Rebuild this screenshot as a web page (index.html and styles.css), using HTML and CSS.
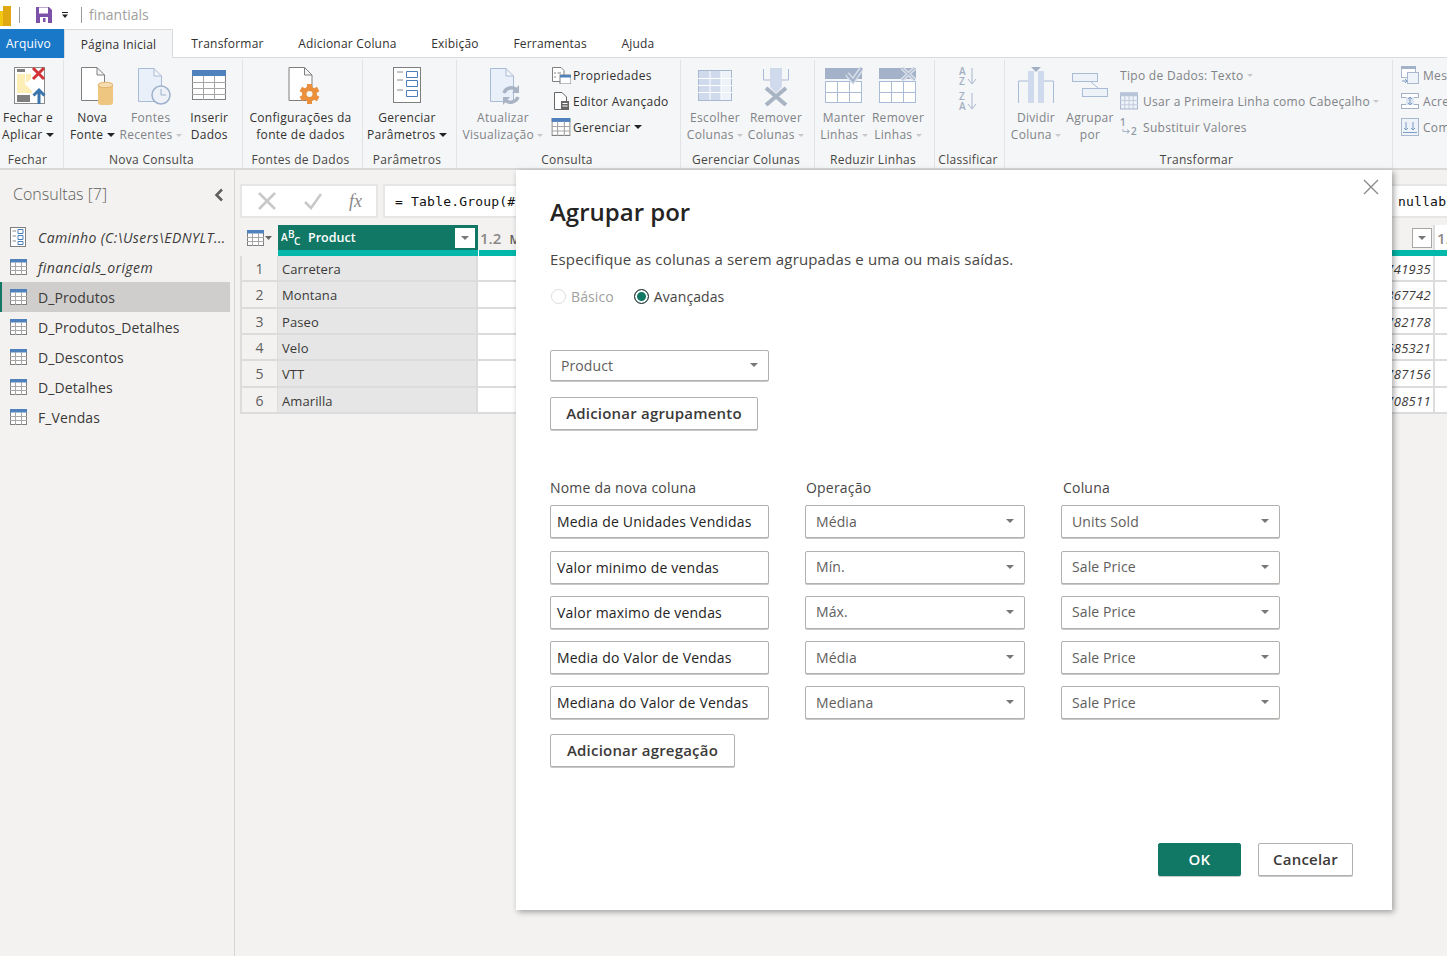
FILE: index.html
```html
<!DOCTYPE html>
<html lang="en">
<head>
	<meta charset="UTF-8">
	<meta name="viewport" content="width=device-width, initial-scale=1.0">
	<title>financials - Power Query</title>
	<link rel="stylesheet" href="styles.css">
</head>
<body>
	<svg class="defs" width="0" height="0">
		<symbol id="tbl" viewBox="0 0 17 16">
			<rect x="0.5" y="0.5" width="16" height="15" fill="#fff" stroke="#7f7f7f"/>
			<rect x="0" y="0" width="17" height="3.5" fill="#4f81bd"/>
			<path d="M0 7.5H17M0 11.5H17M5.5 3V16M11.5 3V16" stroke="#a6a6a6" fill="none"/>
		</symbol>
	</svg>

	<!-- Title bar -->
	<div class="title-bar">
		<svg class="logo" width="11" height="20" viewBox="0 0 11 20"><rect x="0" y="5" width="3" height="15" fill="#f2c811"/><rect x="3" y="0" width="8" height="20" fill="#e0a912"/></svg>
		<span class="title-sep"></span>
		<svg width="20" height="20" viewBox="0 0 20 20"><path d="M2 2H15L18 5V18H2Z" fill="#7b52a8"/><rect x="5" y="2.5" width="9" height="6" fill="#fff"/><rect x="6" y="12" width="8" height="6" fill="#fff"/><rect x="9" y="13" width="2.5" height="4" fill="#7b52a8"/></svg>
		<svg class="qat-arrow" width="8" height="8" viewBox="0 0 8 8"><rect x="1" y="1" width="6" height="1" fill="#222"/><path d="M1 3.5H7L4 7Z" fill="#222"/></svg>
		<span class="title-sep second"></span>
		<span class="title-name">finantials</span>
	</div>

	<!-- Tabs -->
	<div class="tabs">
		<div class="tab-file">Arquivo</div>
		<div class="tab tab-active">Página Inicial</div>
		<div class="tab">Transformar</div>
		<div class="tab">Adicionar Coluna</div>
		<div class="tab">Exibição</div>
		<div class="tab">Ferramentas</div>
		<div class="tab">Ajuda</div>
	</div>

	<!-- Ribbon -->
	<div class="ribbon">
		<div class="group g-fechar">
			<div class="group-body">
				<div class="rbtn w-fechar">
					<svg width="36" height="40" viewBox="0 0 36 40">
						<rect x="4.5" y="1.5" width="30" height="36" fill="#fff" stroke="#8a8a8a"/>
						<rect x="7" y="3" width="8" height="3" fill="#7f7f7f"/>
						<path d="M7 8H15V18L22 25V27H7Z" fill="#fdeeb5"/>
						<path d="M16 8H21V13L16 17Z" fill="#fdeeb5"/>
						<rect x="7" y="29" width="13" height="7" fill="#7f7f7f"/>
						<path d="M23 2L34 13M34 2L23 13" stroke="#d13438" stroke-width="3" fill="none"/>
						<path d="M29 38V24M23.500 29.500L29 24L34.500 29.500" stroke="#3a75ad" stroke-width="3" fill="none"/>
					</svg>
					<span>Fechar e</span>
					<span>Aplicar <i class="caret"></i></span>
				</div>
			</div>
			<div class="group-label">Fechar</div>
		</div>

		<div class="group g-nova">
			<div class="group-body">
				<div class="rbtn w-58">
					<svg width="42" height="40" viewBox="0 0 42 40">
						<path d="M10.500 1.500H26L33.500 9V34.500H10.500Z M26 1.500V9H33.500" fill="#fff" stroke="#7f7f7f"/>
						<rect x="27" y="18" width="15" height="21" rx="3" fill="#efc67f"/>
						<ellipse cx="34.500" cy="19" rx="7.500" ry="2.700" fill="#f6dcae" stroke="#e0b269"/>
					</svg>
					<span>Nova</span>
					<span>Fonte <i class="caret"></i></span>
				</div>
				<div class="rbtn w-58 off">
					<svg width="42" height="40" viewBox="0 0 42 40">
						<path d="M8.500 2.500H24L31.500 10V35.500H8.500Z M24 2.500V10H31.500" fill="#e9f0fa" stroke="#a9bbd6"/>
						<circle cx="31" cy="29" r="9" fill="#eef2f8" stroke="#9eb1cd" stroke-width="1.500"/>
						<path d="M31 23V29H36" stroke="#9eb1cd" fill="none"/>
					</svg>
					<span>Fontes</span>
					<span>Recentes <i class="caret"></i></span>
				</div>
				<div class="rbtn w-58">
					<svg width="36" height="40" viewBox="0 0 36 40">
						<rect x="1.500" y="4.500" width="33" height="29" fill="#fff" stroke="#808080"/>
						<rect x="1" y="4" width="34" height="6" fill="#4f81bd"/>
						<path d="M1 16.500H35M1 22.500H35M1 28.500H35M12.500 10V34M23.500 10V34" stroke="#a6a6a6" fill="none"/>
					</svg>
					<span>Inserir</span>
					<span>Dados</span>
				</div>
			</div>
			<div class="group-label">Nova Consulta</div>
		</div>

		<div class="group g-fontes">
			<div class="group-body">
				<div class="rbtn w-fill">
					<svg width="38" height="40" viewBox="0 0 38 40">
						<path d="M7 1.500H22.500L30 9V34.500H7Z M22.500 1.500V9H30" fill="#fff" stroke="#7f7f7f"/>
						<g fill="#ea8f3c">
							<rect x="25" y="18" width="5" height="20"/>
							<rect x="25" y="18" width="5" height="20" transform="rotate(60 27.500 28)"/>
							<rect x="25" y="18" width="5" height="20" transform="rotate(120 27.500 28)"/>
							<circle cx="27.500" cy="28" r="7.500"/>
						</g>
						<circle cx="27.500" cy="28" r="3" fill="#f5f6f7"/>
					</svg>
					<span>Configurações da</span>
					<span>fonte de dados</span>
				</div>
			</div>
			<div class="group-label">Fontes de Dados</div>
		</div>

		<div class="group g-param">
			<div class="group-body">
				<div class="rbtn w-fill">
					<svg width="30" height="40" viewBox="0 0 30 40">
						<rect x="1.500" y="1.500" width="27" height="35" fill="#fff" stroke="#7f7f7f"/>
						<path d="M5 6H11M5 14H11M5 24H11" stroke="#8a8a8a" fill="none"/>
						<path d="M14.500 5.500H25.500V11.500H14.500ZM14.500 14.500H25.500V20.500H14.500ZM14.500 24.500H25.500V30.500H14.500Z" fill="#fff" stroke="#4a7ebb"/>
					</svg>
					<span>Gerenciar</span>
					<span>Parâmetros <i class="caret"></i></span>
				</div>
			</div>
			<div class="group-label">Parâmetros</div>
		</div>

		<div class="group g-consulta">
			<div class="group-body">
				<div class="rbtn w-atual off">
					<svg width="34" height="40" viewBox="0 0 34 40">
						<path d="M4.500 2.500H20L27.500 10V35.500H4.500Z M20 2.500V10H27.500" fill="#e9f0fa" stroke="#a9bbd6"/>
						<path d="M18 27A8 8 0 0 1 31 24M32 31A8 8 0 0 1 19 34" stroke="#a8b3c4" stroke-width="3.500" fill="none"/>
						<path d="M33 19V27H26ZM17 39V31H24Z" fill="#a8b3c4"/>
					</svg>
					<span>Atualizar</span>
					<span>Visualização <i class="caret"></i></span>
				</div>
				<div class="small-col">
					<div class="sbtn">
						<svg width="20" height="18" viewBox="0 0 20 18"><path d="M1.500 1.500H10L13 4.500V15.500H1.500Z" fill="#fff" stroke="#808080"/><path d="M3 7H5M6.500 7H10M3 11H5" stroke="#808080"/><rect x="9" y="9" width="11" height="9" fill="#fff" stroke="#7f7f7f"/><rect x="9" y="9" width="11" height="2.500" fill="#4f81bd"/></svg>
						<span>Propriedades</span>
					</div>
					<div class="sbtn">
						<svg width="20" height="18" viewBox="0 0 20 18"><path d="M3.500 0.500H11L15.500 5V17.500H3.500Z" fill="#fff" stroke="#666"/><rect x="10" y="9" width="8" height="9" fill="#666"/><path d="M11.500 11.500H16.500M11.500 14H16.500" stroke="#fff"/></svg>
						<span>Editor Avançado</span>
					</div>
					<div class="sbtn">
						<svg width="20" height="18" viewBox="0 0 17 16"><use href="#tbl"/></svg>
						<span>Gerenciar <i class="caret"></i></span>
					</div>
				</div>
			</div>
			<div class="group-label">Consulta</div>
		</div>

		<div class="group g-colunas">
			<div class="group-body off">
				<div class="rbtn w-escolher">
					<svg width="36" height="40" viewBox="0 0 36 40">
						<rect x="1.500" y="4.500" width="33" height="30" fill="#eef2f9" stroke="#a9b7cf"/>
						<rect x="2" y="5" width="22" height="29" fill="#cfdbec"/>
						<path d="M1 12.500H35M1 19.500H35M1 26.500H35M13 5V34M24 5V34" stroke="#fff" fill="none"/>
					</svg>
					<span>Escolher</span>
					<span>Colunas <i class="caret"></i></span>
				</div>
				<div class="rbtn w-remover">
					<svg width="30" height="40" viewBox="0 0 30 40">
						<path d="M2.500 3V14H9M27.500 3V14H21" stroke="#a9bbd6" fill="none"/>
						<path d="M9 2H21V21L15 27L9 21Z" fill="#cfdbec"/>
						<path d="M5 22L25 39M25 22L5 39" stroke="#a8b3c4" stroke-width="4" fill="none"/>
					</svg>
					<span>Remover</span>
					<span>Colunas <i class="caret"></i></span>
				</div>
			</div>
			<div class="group-label">Gerenciar Colunas</div>
		</div>

		<div class="group g-linhas">
			<div class="group-body off">
				<div class="rbtn w-manter">
					<svg width="38" height="40" viewBox="0 0 38 40">
						<rect x="0" y="2" width="37" height="11" fill="#a3b2c9"/>
						<rect x="0.500" y="15.500" width="36" height="21" fill="#fff" stroke="#a9bbd6"/>
						<path d="M0 26.500H37M12.500 15V37M24.500 15V37" stroke="#a9bbd6" fill="none"/>
						<path d="M22 8L28 15L37 2" stroke="#d6dde8" stroke-width="5" fill="none"/>
						<path d="M22 8L28 15L37 2" stroke="#a3b2c9" stroke-width="2" fill="none"/>
					</svg>
					<span>Manter</span>
					<span>Linhas <i class="caret"></i></span>
				</div>
				<div class="rbtn w-manter">
					<svg width="38" height="40" viewBox="0 0 38 40">
						<rect x="0" y="2" width="37" height="11" fill="#a3b2c9"/>
						<rect x="0.500" y="15.500" width="36" height="21" fill="#fff" stroke="#a9bbd6"/>
						<path d="M0 26.500H37M12.500 15V37M24.500 15V37" stroke="#a9bbd6" fill="none"/>
						<path d="M23 2L36 14M36 2L23 14" stroke="#d6dde8" stroke-width="4" fill="none"/>
						<path d="M23 2L36 14M36 2L23 14" stroke="#a3b2c9" fill="none"/>
					</svg>
					<span>Remover</span>
					<span>Linhas <i class="caret"></i></span>
				</div>
			</div>
			<div class="group-label">Reduzir Linhas</div>
		</div>

		<div class="group g-class">
			<div class="group-body sort-body">
				<svg width="20" height="20" viewBox="0 0 20 20"><text x="1" y="9" class="sort-text">A</text><text x="1" y="19" class="sort-text">Z</text><path d="M14 2V17M10 13L14 18L18 13" stroke="#a9b7cf" fill="none"/></svg>
				<svg width="20" height="20" viewBox="0 0 20 20"><text x="1" y="9" class="sort-text">Z</text><text x="1" y="19" class="sort-text">A</text><path d="M14 2V17M10 13L14 18L18 13" stroke="#a9b7cf" fill="none"/></svg>
			</div>
			<div class="group-label">Classificar</div>
		</div>

		<div class="group g-transf">
			<div class="group-body off">
				<div class="rbtn w-dividir">
					<svg width="38" height="40" viewBox="0 0 38 40">
						<path d="M1.500 37V15H11M36.500 37V15H27" stroke="#a9bbd6" fill="none"/>
						<rect x="11" y="5" width="6" height="32" fill="#cfdbec"/><rect x="21" y="5" width="6" height="32" fill="#cfdbec"/>
						<path d="M14 1H24L19 6Z" fill="#a3afc2"/>
					</svg>
					<span>Dividir</span>
					<span>Coluna <i class="caret"></i></span>
				</div>
				<div class="rbtn w-agrupar">
					<svg width="38" height="40" viewBox="0 0 38 40">
						<rect x="1.500" y="7.500" width="25" height="8" fill="#edf1f8" stroke="#a9bbd6"/>
						<rect x="11.500" y="22.500" width="25" height="8" fill="#edf1f8" stroke="#a9bbd6"/>
						<path d="M20 16L27 22" stroke="#a9bbd6" fill="none"/>
					</svg>
					<span>Agrupar</span>
					<span>por</span>
				</div>
				<div class="small-col">
					<div class="sbtn"><span>Tipo de Dados: Texto <i class="caret"></i></span></div>
					<div class="sbtn">
						<svg width="18" height="18" viewBox="0 0 17 16"><rect x="0.500" y="0.500" width="16" height="15" fill="#eef2f9" stroke="#a9b7cf"/><rect x="0" y="0" width="17" height="3.500" fill="#b7c3d6"/><path d="M0 7.500H17M0 11.500H17M4.500 3V16M8.500 3V16M12.500 3V16" stroke="#c3cddd" fill="none"/></svg>
						<span>Usar a Primeira Linha como Cabeçalho <i class="caret"></i></span>
					</div>
					<div class="sbtn">
						<svg class="swap-icon" width="18" height="18" viewBox="0 0 18 18"><text x="0" y="8" class="swap-text">1</text><text x="11" y="17" class="swap-text">2</text><path d="M3 11V13.500H9M7 11.500L9.500 13.500L7 15.500" stroke="#a3afc2" fill="none"/></svg>
						<span>Substituir Valores</span>
					</div>
				</div>
			</div>
			<div class="group-label">Transformar</div>
		</div>

		<div class="group g-combinar">
			<div class="group-body off">
				<div class="small-col">
					<div class="sbtn">
						<svg width="18" height="18" viewBox="0 0 18 18"><rect x="0.500" y="0.500" width="14" height="11" fill="#fff" stroke="#a9b7cf"/><rect x="0" y="0" width="15" height="3" fill="#a3b2c9"/><rect x="6.500" y="6.500" width="11" height="11" fill="#eef2f9" stroke="#a9b7cf"/><path d="M1 15H6M4 13L6 15L4 17" stroke="#7d9cc4" fill="none"/></svg>
						<span>Mesclar Consultas</span>
					</div>
					<div class="sbtn">
						<svg width="18" height="18" viewBox="0 0 18 18"><rect x="0.500" y="1.500" width="17" height="4" fill="#fff" stroke="#a3afc2"/><rect x="0.500" y="12.500" width="17" height="4" fill="#fff" stroke="#a3afc2"/><rect x="5" y="5" width="8" height="8" fill="#dde5f1"/><path d="M9 5V13M7 7L9 5L11 7M7 11L9 13L11 11" stroke="#7d9cc4" fill="none"/></svg>
						<span>Acrescentar Consultas</span>
					</div>
					<div class="sbtn">
						<svg width="18" height="18" viewBox="0 0 18 18"><rect x="0.500" y="0.500" width="17" height="17" fill="#eef2f9" stroke="#a9b7cf"/><path d="M5 4V12M3 10L5 12L7 10M12 4V12M10 10L12 12L14 10M2 14.500H16" stroke="#7d9cc4" fill="none"/></svg>
						<span>Combinar Arquivos</span>
					</div>
				</div>
			</div>
		</div>
	</div>

	<!-- Queries pane and data grid -->
	<div class="workspace">
		<div class="queries">
			<div class="queries-head">
				<span>Consultas [7]</span>
				<svg width="10" height="14" viewBox="0 0 10 14"><path d="M8 1.500L2.500 7L8 12.500" stroke="#605e5c" stroke-width="2.500" fill="none"/></svg>
			</div>
			<div class="query">
				<svg width="17" height="20" viewBox="0 0 17 20"><rect x="0.500" y="0.500" width="15" height="19" fill="#fff" stroke="#7f7f7f"/><path d="M2.500 4H6M2.500 9H6M2.500 14H6" stroke="#8a8a8a"/><path d="M8 2.500H13V6.500H8ZM8 8.500H13V12.500H8ZM8 14.500H13V17.500H8Z" fill="#fff" stroke="#4a7ebb"/></svg>
				<em>Caminho (C:\Users\EDNYLT...</em>
			</div>
			<div class="query"><svg width="17" height="16"><use href="#tbl"/></svg><em>financials_origem</em></div>
			<div class="query query-active"><svg width="17" height="16"><use href="#tbl"/></svg><span>D_Produtos</span></div>
			<div class="query"><svg width="17" height="16"><use href="#tbl"/></svg><span>D_Produtos_Detalhes</span></div>
			<div class="query"><svg width="17" height="16"><use href="#tbl"/></svg><span>D_Descontos</span></div>
			<div class="query"><svg width="17" height="16"><use href="#tbl"/></svg><span>D_Detalhes</span></div>
			<div class="query"><svg width="17" height="16"><use href="#tbl"/></svg><span>F_Vendas</span></div>
		</div>

		<div class="main">
			<div class="formula-row">
				<div class="formula-btns">
					<svg width="20" height="18" viewBox="0 0 20 18"><path d="M2 1L18 17M18 1L2 17" stroke="#c8c8c8" stroke-width="2.500" fill="none"/></svg>
					<svg width="20" height="18" viewBox="0 0 20 18"><path d="M2 10L8 16L18 2" stroke="#c8c8c8" stroke-width="2.500" fill="none"/></svg>
					<span class="fx">fx</span>
				</div>
				<div class="formula-box">
					<span class="formula-left">= Table.Group(#"Tipo Alterado", {"Product"}, {{"Media de Unidades Vendidas", each List.Average([Units Sold]), type</span>
					<span>nullable number}})</span>
				</div>
			</div>

			<div class="grid">
				<div class="grid-head">
					<div class="cell-idx corner">
						<svg width="17" height="16"><use href="#tbl"/></svg>
						<svg width="7" height="4" viewBox="0 0 7 4"><path d="M0 0H7L3.500 4Z" fill="#666"/></svg>
					</div>
					<div class="cell-product head-product">
						<svg width="20" height="18" viewBox="0 0 20 18"><text x="0" y="12" class="abc">A</text><text x="7" y="9" class="abc">B</text><text x="13" y="16" class="abc">C</text></svg>
						<span class="head-name">Product</span>
						<span class="filter-btn"><i class="caret dark"></i></span>
					</div>
					<div class="cell-col head-col">
						<span><b class="type">1.2</b> Media de Unidades Vendidas</span>
						<span class="filter-btn plain"><i class="caret dark"></i></span>
					</div>
					<div class="cell-last head-col"><b class="type">1.2</b></div>
				</div>
				<div class="quality">
					<i class="quality-gap"></i>
				</div>
				<div class="grid-row"><div class="cell-idx">1</div><div class="cell-product">Carretera</div><div class="cell-col num">1741935</div><div class="cell-last"></div></div>
				<div class="grid-row"><div class="cell-idx">2</div><div class="cell-product">Montana</div><div class="cell-col num">1867742</div><div class="cell-last"></div></div>
				<div class="grid-row"><div class="cell-idx">3</div><div class="cell-product">Paseo</div><div class="cell-col num">1782178</div><div class="cell-last"></div></div>
				<div class="grid-row"><div class="cell-idx">4</div><div class="cell-product">Velo</div><div class="cell-col num">1685321</div><div class="cell-last"></div></div>
				<div class="grid-row"><div class="cell-idx">5</div><div class="cell-product">VTT</div><div class="cell-col num">1787156</div><div class="cell-last"></div></div>
				<div class="grid-row"><div class="cell-idx">6</div><div class="cell-product">Amarilla</div><div class="cell-col num">1708511</div><div class="cell-last"></div></div>
			</div>
		</div>
	</div>

	<!-- Group by dialog -->
	<div class="dialog">
		<svg class="dialog-close" width="16" height="16" viewBox="0 0 16 16"><path d="M1 1L15 15M15 1L1 15" stroke="#8a8886" stroke-width="1.300" fill="none"/></svg>
		<h1 class="dialog-title">Agrupar por</h1>
		<p class="dialog-text">Especifique as colunas a serem agrupadas e uma ou mais saídas.</p>
		<div class="radios">
			<span class="radio radio-off"><i class="radio-dot"></i>Básico</span>
			<span class="radio"><i class="radio-dot radio-on"></i>Avançadas</span>
		</div>
		<div class="select select-group">Product<i class="caret dark"></i></div>
		<div class="btn btn-group">Adicionar agrupamento</div>

		<div class="agg-grid">
			<div class="agg-label">Nome da nova coluna</div>
			<div class="agg-label label-op">Operação</div>
			<div class="agg-label label-col">Coluna</div>

			<div class="input">Media de Unidades Vendidas</div>
			<div class="select">Média<i class="caret dark"></i></div>
			<div class="select">Units Sold<i class="caret dark"></i></div>

			<div class="input">Valor minimo de vendas</div>
			<div class="select">Mín.<i class="caret dark"></i></div>
			<div class="select">Sale Price<i class="caret dark"></i></div>

			<div class="input">Valor maximo de vendas</div>
			<div class="select">Máx.<i class="caret dark"></i></div>
			<div class="select">Sale Price<i class="caret dark"></i></div>

			<div class="input">Media do Valor de Vendas</div>
			<div class="select">Média<i class="caret dark"></i></div>
			<div class="select">Sale Price<i class="caret dark"></i></div>

			<div class="input">Mediana do Valor de Vendas</div>
			<div class="select">Mediana<i class="caret dark"></i></div>
			<div class="select">Sale Price<i class="caret dark"></i></div>
		</div>
		<div class="btn btn-agg">Adicionar agregação</div>

		<div class="dialog-foot">
			<div class="btn btn-ok">OK</div>
			<div class="btn btn-cancel">Cancelar</div>
		</div>
	</div>
</body>
</html>
```

FILE: styles.css
```css
html, body {
	margin: 0;
	padding: 0;
	height: 956px;
	overflow: hidden;
}

body {
	width: 1447px;
	background-color: #f3f2f1;
	font-family: "Open Sans", "Noto Sans", sans-serif;
	font-size: 12px;
	color: #3b3a39;
	display: flex;
	flex-direction: column;
}

.defs {
	display: none;
}

/* Title bar */
.title-bar {
	height: 29px;
	background-color: #fff;
	display: flex;
	align-items: center;
}

.logo {
	margin-right: 8px;
	margin-top: 3px;
}

.title-sep {
	width: 1px;
	height: 16px;
	background-color: #9a9a9a;
	margin-right: 14px;
}

.title-sep.second {
	margin: 0 7px 0 12px;
}

.qat-arrow {
	margin-left: 7px;
}

.title-name {
	font-size: 14px;
	color: #a19f9d;
}

/* Tabs */
.tabs {
	height: 28px;
	background-color: #fff;
	display: flex;
	border-bottom: 1px solid #dadbdc;
	letter-spacing: 0.2px;
}

.tab-file {
	width: 64px;
	height: 29px;
	box-sizing: border-box;
	padding-left: 6px;
	background-color: #1a78c9;
	color: #fff;
	line-height: 29px;
}

.tab {
	padding: 0 17.300px;
	line-height: 29px;
	color: #323130;
}

.tab-active {
	width: 109px;
	box-sizing: border-box;
	padding: 0;
	text-align: center;
	height: 29px;
	background-color: #f5f6f7;
	border: 1px solid #dadbdc;
	border-bottom: none;
	margin-right: 1px;
}

/* Ribbon */
.ribbon {
	height: 110px;
	background-color: #f5f6f7;
	border-bottom: 2px solid #d9d9d9;
	display: flex;
	overflow: hidden;
	flex-shrink: 0;
	letter-spacing: 0.3px;
}

.group {
	box-sizing: border-box;
	height: 108px;
	margin-top: 2px;
	border-right: 1px solid #e2e3e5;
	display: flex;
	flex-direction: column;
	flex-shrink: 0;
}

.group-body {
	flex: 1;
	display: flex;
	min-height: 0;
}

.group-label {
	height: 17px;
	line-height: 17px;
	text-align: center;
	color: #484644;
	white-space: nowrap;
}

.g-fechar { width: 64px; padding-right: 8px; }
.g-nova { width: 179px; padding-right: 3px; }
.g-fontes { width: 120px; padding-right: 4px; }
.g-param { width: 94px; padding-right: 5px; }
.g-consulta { width: 224px; }
.g-colunas { width: 134px; }
.g-linhas { width: 120px; }
.g-class { width: 70px; padding-right: 3px; }
.g-transf { width: 388px; }
.g-combinar { width: 60px; border-right: none; }

.g-consulta .group-label { padding-right: 3px; }
.g-colunas .group-label { padding-right: 3px; }
.g-linhas .group-label { padding-right: 3px; }
.g-transf .group-label { padding-right: 4px; }

.g-nova .group-body { margin-left: -1px; }
.g-linhas .group-body { padding-left: 2px; }

.rbtn {
	display: flex;
	flex-direction: column;
	align-items: center;
	line-height: 17px;
	white-space: nowrap;
	flex-shrink: 0;
	color: #323130;
}

.rbtn svg {
	height: 40px;
	margin: 6px 0 3px;
}

.rbtn span {
	display: block;
}

.off .rbtn, .rbtn.off, .off .sbtn {
	color: #7f8388;
}

.w-fechar { width: 56px; }
.w-58 { width: 58.500px; }
.w-fill { width: 100%; }
.w-atual { width: 92px; }
.w-escolher { width: 68px; }
.w-remover { width: 54px; }
.w-manter { width: 54px; }
.w-dividir { width: 62px; }
.w-agrupar { width: 46px; }

.small-col {
	display: flex;
	flex-direction: column;
	padding-top: 2px;
}

.g-consulta .small-col {
	margin-left: 2px;
}

.g-transf .small-col {
	margin-left: 7px;
}

.g-combinar .small-col {
	margin-left: 8px;
}

.sbtn {
	height: 26px;
	display: flex;
	align-items: center;
	gap: 4px;
	white-space: nowrap;
	color: #323130;
}

.g-consulta .sbtn {
	gap: 2px;
}

.g-transf .sbtn {
	gap: 5px;
}

.sort-body {
	flex-direction: column;
	align-items: center;
	gap: 5px;
	padding-top: 6px;
}

.sort-body svg, .swap-icon {
	overflow: visible;
}

.sort-text {
	font-size: 10px;
	font-weight: 600;
	fill: #a3afc2;
}

.swap-text {
	font-size: 10px;
	font-weight: 600;
	fill: #8f99a8;
}

.caret {
	display: inline-block;
	width: 0;
	height: 0;
	border-left: 4px solid transparent;
	border-right: 4px solid transparent;
	border-top: 4px solid #252423;
	vertical-align: 2.500px;
}

.off .caret, .rbtn.off .caret {
	border-left-width: 3.500px;
	border-right-width: 3.500px;
	border-top-width: 3.500px;
	border-top-color: #c8c8c8;
}

.caret.dark {
	border-top-color: #797775;
}

/* Queries pane */
.workspace {
	flex: 1;
	display: flex;
	min-height: 0;
}

.queries {
	width: 234px;
	border-right: 1px solid #d6d6d6;
	flex-shrink: 0;
}

.queries-head {
	height: 52px;
	box-sizing: border-box;
	padding: 13px 10px 0 13px;
	display: flex;
	justify-content: space-between;
	align-items: flex-start;
	font-size: 16px;
	font-weight: 300;
	color: #605e5c;
}

.queries-head svg {
	margin-top: 5px;
}

.query {
	width: 230px;
	height: 30px;
	box-sizing: border-box;
	padding-left: 10px;
	display: flex;
	align-items: center;
	gap: 11px;
	font-size: 14px;
	letter-spacing: 0.1px;
	color: #3b3a39;
	white-space: nowrap;
	overflow: hidden;
}

.query em {
	letter-spacing: 0.4px;
}

.query-active {
	background-color: #cfcecc;
	border-left: 2px solid #117865;
	padding-left: 8px;
}

/* Formula bar */
.main {
	flex: 1;
	min-width: 0;
	padding: 14px 0 0 5px;
}

.formula-row {
	display: flex;
	gap: 5px;
	height: 34px;
}

.formula-btns {
	width: 138px;
	box-sizing: border-box;
	background-color: #fff;
	border: 2px solid #e6e6e6;
	display: flex;
	align-items: center;
	justify-content: space-between;
	padding: 0 14px 0 15px;
}

.fx {
	font-family: "Liberation Serif", serif;
	font-style: italic;
	font-size: 18px;
	color: #8a8886;
}

.formula-box {
	flex: 1;
	min-width: 0;
	box-sizing: border-box;
	background-color: #fff;
	border: 2px solid #e6e6e6;
	border-right: none;
	padding-left: 10px;
	display: flex;
	align-items: center;
	font-family: "DejaVu Sans Mono", "Liberation Mono", monospace;
	font-size: 13px;
	letter-spacing: 0.2px;
	color: #111;
	white-space: nowrap;
	overflow: hidden;
}

.formula-left {
	width: 1003px;
	flex-shrink: 0;
	overflow: hidden;
}

/* Data grid */
.grid {
	margin-top: 7px;
}

.grid-head {
	display: flex;
	height: 25px;
	font-weight: 600;
	background-color: #f3f2f1;
}

.cell-idx {
	width: 38px;
	flex-shrink: 0;
	box-sizing: border-box;
	border-left: 2px solid #dcdcdc;
	border-right: 1px solid #dcdcdc;
	text-align: center;
	font-size: 14px;
	color: #605e5c;
}

.corner {
	display: flex;
	align-items: center;
	justify-content: center;
	gap: 1px;
	border-left: none;
	border-right: none;
}

.cell-product {
	width: 200px;
	flex-shrink: 0;
	box-sizing: border-box;
	background-color: #e6e6e6;
	border-right: 2px solid #dcdcdc;
	padding-left: 4px;
	font-size: 13px;
	color: #3b3a39;
}

.head-product {
	background-color: #117865;
	color: #fff;
	display: flex;
	align-items: center;
	padding: 0 3px 0 3px;
	border-right: none;
}

.head-name {
	flex: 1;
	margin-left: 7px;
	font-size: 12.500px;
	line-height: 26px;
}

.abc {
	font-size: 10px;
	font-weight: 600;
	fill: #fff;
}

.filter-btn {
	width: 20px;
	height: 20px;
	box-sizing: border-box;
	background-color: #fff;
	display: flex;
	align-items: center;
	justify-content: center;
}

.filter-btn .caret {
	margin: 0;
	border-left-width: 4.500px;
	border-right-width: 4.500px;
	border-top-width: 4.500px;
	vertical-align: 0;
}

.filter-btn.plain {
	border: 1px solid #a6a6a6;
}

.cell-col {
	width: 957px;
	flex-shrink: 0;
	box-sizing: border-box;
	background-color: #fff;
	border-right: 2px solid #dcdcdc;
}

.head-col {
	background-color: #f3f2f1;
	display: flex;
	align-items: center;
	justify-content: space-between;
	padding-left: 2px;
	padding-right: 1px;
	color: #605e5c;
}

.type {
	font-size: 15px;
	font-weight: 600;
	color: #8a8886;
	margin-right: 5px;
}

.cell-last {
	flex: 1;
	background-color: #fff;
}

.head-col.cell-last {
	justify-content: flex-start;
}

.quality {
	height: 6px;
	background-color: #01b8aa;
	margin-left: 38px;
	display: flex;
}

.quality-gap {
	display: block;
	width: 1px;
	margin-left: 200px;
	background-color: #fff;
}

.grid-row {
	display: flex;
	height: 26.330px;
	box-sizing: border-box;
	border-bottom: 2px solid #dcdcdc;
	line-height: 26px;
}

.grid-row .cell-product {
	padding-left: 4px;
	letter-spacing: 0.1px;
}

.cell-idx, .cell-product, .cell-col {
	white-space: nowrap;
}

.num {
	text-align: right;
	font-style: italic;
	font-size: 13px;
	letter-spacing: 0.3px;
	padding-right: 2px;
	color: #3b3a39;
}

/* Dialog */
.dialog {
	position: absolute;
	left: 516px;
	top: 170px;
	width: 876px;
	height: 740px;
	box-sizing: border-box;
	padding: 26px 34px 0 34px;
	background-color: #fff;
	box-shadow: 2px 2px 6px rgba(0, 0, 0, 0.35);
	display: flex;
	flex-direction: column;
	font-size: 14px;
	letter-spacing: 0.1px;
	color: #323130;
}

.dialog-close {
	position: absolute;
	right: 13px;
	top: 9px;
}

.dialog-title {
	margin: 0;
	font-size: 24px;
	line-height: 32px;
	font-weight: 600;
	letter-spacing: 0;
	color: #252423;
}

.dialog-text {
	margin: 21px 0 0 0;
	line-height: 20px;
	font-size: 15px;
	letter-spacing: 0.16px;
	color: #484644;
}

.radios {
	display: flex;
	margin: 17px 0 0 1px;
	height: 20px;
	align-items: center;
	gap: 20px;
	color: #484644;
}

.radio {
	display: flex;
	align-items: center;
	gap: 5px;
}

.radio-off {
	color: #a19f9d;
}

.radio-dot {
	display: block;
	width: 15px;
	height: 15px;
	box-sizing: border-box;
	border: 1px solid #dcdcdc;
	border-radius: 50%;
	background-color: #fff;
}

.radio-on {
	border-color: #323130;
	background-color: #117865;
	box-shadow: inset 0 0 0 2px #fff;
}

.select, .input {
	height: 33px;
	box-sizing: border-box;
	border: 1px solid #b3b0ad;
	border-radius: 2px;
	display: flex;
	align-items: center;
	padding-left: 10px;
	background-color: #fff;
	color: #605e5c;
	white-space: nowrap;
	box-shadow: 0 1px 0 #c8c8c8;
}

.input {
	padding-left: 6px;
	letter-spacing: 0.2px;
	color: #252423;
}

.select {
	justify-content: space-between;
	padding-right: 10px;
	padding-bottom: 1px;
}

.select .caret {
	border-left-width: 4px;
	border-right-width: 4px;
	border-top-width: 4px;
	vertical-align: 0;
}

.select-group {
	width: 219px;
	height: 31px;
	margin-top: 44px;
}

.btn {
	height: 33px;
	box-sizing: border-box;
	border: 1px solid #b3b0ad;
	border-radius: 2px;
	display: flex;
	align-items: center;
	justify-content: center;
	padding-bottom: 2px;
	font-size: 15px;
	font-weight: 600;
	letter-spacing: 0.2px;
	color: #3b3a39;
	background-color: #fff;
	box-shadow: 0 1px 0 #c8c8c8;
}

.btn-group {
	width: 208px;
	margin-top: 16px;
}

.agg-grid {
	display: grid;
	grid-template-columns: 219px 220px 219px;
	column-gap: 36px;
	row-gap: 12.250px;
	margin-top: 48px;
}

.agg-label {
	height: 18px;
	line-height: 20px;
	margin-bottom: -3px;
	letter-spacing: 0.2px;
	color: #484644;
}

.label-op {
	padding-left: 1px;
}

.label-col {
	padding-left: 2px;
}

.btn-agg {
	width: 185px;
	margin-top: 15px;
}

.dialog-foot {
	display: flex;
	justify-content: flex-end;
	gap: 17px;
	margin-top: 76px;
	padding-right: 5px;
}

.btn-ok {
	width: 83px;
	background-color: #117865;
	border-color: #117865;
	color: #fff;
}

.btn-cancel {
	width: 95px;
}
```
